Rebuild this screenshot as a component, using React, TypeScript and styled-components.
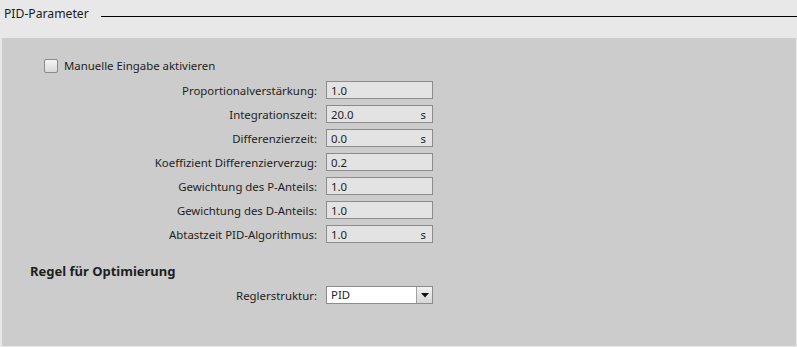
import React from "react";
import styled, { createGlobalStyle } from "styled-components";

interface ParamRow {
  label: string;
  value: string;
  unit?: string;
}

const rows: ParamRow[] = [
  { label: "Proportionalverstärkung:", value: "1.0" },
  { label: "Integrationszeit:", value: "20.0", unit: "s" },
  { label: "Differenzierzeit:", value: "0.0", unit: "s" },
  { label: "Koeffizient Differenzierverzug:", value: "0.2" },
  { label: "Gewichtung des P-Anteils:", value: "1.0" },
  { label: "Gewichtung des D-Anteils:", value: "1.0" },
  { label: "Abtastzeit PID-Algorithmus:", value: "1.0", unit: "s" },
];

const GlobalStyle = createGlobalStyle`
  html, body {
    margin: 0;
    padding: 0;
    background: #e8e8e8;
  }
  body {
    font-family: "Noto Sans", "Open Sans", sans-serif;
    font-size: 11.4px;
    color: #1e1e1e;
  }
`;

const App: React.FC = () => {
  return (
    <>
      <GlobalStyle />
      <Page>
        <Header>
          <Title>PID-Parameter</Title>
          <Rule />
        </Header>
        <Panel>
          <CheckRow>
            <CheckBox />
            <span>Manuelle Eingabe aktivieren</span>
          </CheckRow>
          <FormGrid $top={8}>
            {rows.map((r) => (
              <React.Fragment key={r.label}>
                <Label>{r.label}</Label>
                <Field>
                  <span>{r.value}</span>
                  {r.unit && <Unit>{r.unit}</Unit>}
                </Field>
              </React.Fragment>
            ))}
          </FormGrid>
          <SectionTitle>Regel für Optimierung</SectionTitle>
          <FormGrid $top={6}>
            <Label>Reglerstruktur:</Label>
            <Select>
              <SelectText>PID</SelectText>
              <DropButton>
                <svg width="8" height="5" viewBox="0 0 8 5">
                  <path d="M0 0 H8 L4 4.5 Z" fill="#111" />
                </svg>
              </DropButton>
            </Select>
          </FormGrid>
        </Panel>
      </Page>
    </>
  );
};

const Page = styled.div`
  width: 797px;
  height: 347px;
  display: flex;
  flex-direction: column;
`;

const Header = styled.div`
  height: 38px;
  display: flex;
  align-items: flex-start;
  padding-left: 4px;
  box-sizing: border-box;
`;

const Title = styled.div`
  font-size: 12.2px;
  line-height: 16px;
  padding-top: 6px;
  color: #1a1a24;
`;

const Rule = styled.div`
  flex: 1;
  height: 0;
  border-top: 1px solid #000;
  margin: 16px 0 0 12px;
`;

const Panel = styled.div`
  background: #cccccc;
  margin: 0 1px 1px 2px;
  flex: 1;
  padding-top: 20px;
  box-sizing: border-box;
`;

const CheckRow = styled.div`
  display: flex;
  align-items: center;
  gap: 6px;
  margin-left: 42px;
  height: 15px;
`;

const CheckBox = styled.div`
  width: 12px;
  height: 12px;
  border: 1px solid #8a8a8a;
  border-radius: 2px;
  background: linear-gradient(#f4f4f4, #d8d8d8);
`;

const FormGrid = styled.div<{ $top: number }>`
  display: grid;
  grid-template-columns: 315px 107px;
  column-gap: 9px;
  row-gap: 6px;
  grid-auto-rows: 18px;
  margin-top: ${(p) => p.$top}px;
`;

const Label = styled.div`
  text-align: right;
  align-self: center;
  white-space: nowrap;
`;

const Field = styled.div`
  display: flex;
  align-items: center;
  justify-content: space-between;
  border: 1px solid #8c8c8c;
  background: #e3e3e3;
  padding: 0 6px 0 4px;
  box-sizing: border-box;
  height: 18px;
`;

const Unit = styled.span``;

const SectionTitle = styled.div`
  font-size: 13px;
  font-weight: bold;
  margin: 19px 0 0 28px;
  height: 18px;
  line-height: 18px;
`;

const Select = styled.div`
  display: flex;
  border: 1px solid #8c8c8c;
  background: #fff;
  height: 18px;
  box-sizing: border-box;
`;

const SelectText = styled.div`
  flex: 1;
  padding-left: 4px;
  line-height: 16px;
`;

const DropButton = styled.div`
  width: 15px;
  border-left: 1px solid #a0a0a0;
  background: linear-gradient(#f2f2f2, #d6d6d6);
  display: flex;
  align-items: center;
  justify-content: center;
`;

export default App;
